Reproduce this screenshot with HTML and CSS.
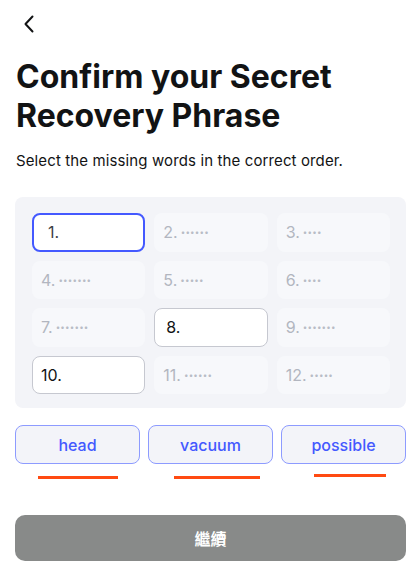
FILE: index.html
```html
<!DOCTYPE html>
<html>
<head>
<meta charset="utf-8">
<link rel="stylesheet" href="styles.css">
</head>
<body>
<div class="page">
  <div class="header">
    <svg class="back" width="12" height="18" viewBox="0 0 12 18"><path d="M9.5 1.5 L2.5 9 L9.5 16.5" fill="none" stroke="#121314" stroke-width="2" stroke-linecap="round" stroke-linejoin="round"/></svg>
  </div>
  <h1 class="title">Confirm your Secret Recovery Phrase</h1>
  <p class="subtitle">Select the missing words in the correct order.</p>
  <div class="grid">
    <div class="cell active">1.</div>
    <div class="cell hidden">2. <span class="dots">••••••</span></div>
    <div class="cell hidden">3. <span class="dots">••••</span></div>
    <div class="cell hidden">4. <span class="dots">•••••••</span></div>
    <div class="cell hidden">5. <span class="dots">•••••</span></div>
    <div class="cell hidden">6. <span class="dots">••••</span></div>
    <div class="cell hidden">7. <span class="dots">•••••••</span></div>
    <div class="cell empty wide-pad">8.</div>
    <div class="cell hidden">9. <span class="dots">•••••••</span></div>
    <div class="cell empty">10.</div>
    <div class="cell hidden">11. <span class="dots">••••••</span></div>
    <div class="cell hidden">12. <span class="dots">•••••</span></div>
  </div>
  <div class="words">
    <div class="word-col"><button class="word">head</button><span class="mark m1"></span></div>
    <div class="word-col"><button class="word">vacuum</button><span class="mark m2"></span></div>
    <div class="word-col"><button class="word">possible</button><span class="mark m3"></span></div>
  </div>
  <button class="continue">繼續</button>
</div>
</body>
</html>
```
FILE: styles.css
```css
* { box-sizing: border-box; }
html, body { margin: 0; padding: 0; background: #ffffff; }
body { font-family: Inter, "Noto Sans CJK TC", sans-serif; color: #121314; }
.page { width: 420px; height: 577px; padding: 0 14px 0 15px; }
.header { height: 46px; padding-top: 15px; padding-left: 8px; }
.back { display: block; }
.title { margin: 11px 0 0 1px; font-size: 32px; line-height: 39px; font-weight: 700; letter-spacing: 0; }
.subtitle { margin: 16px 0 0 1px; font-size: 15px; line-height: 20px; letter-spacing: 0.12px; color: #121314; }
.grid {
  margin-top: 26px;
  background: #f3f4f8;
  border-radius: 8px;
  padding: 16px 16px 14px 17px;
  display: grid;
  grid-template-columns: repeat(3, 1fr);
  gap: 9px 9px;
}
.cell {
  height: 38.5px;
  border-radius: 8px;
  display: flex;
  align-items: center;
  padding-left: 9px;
  font-size: 16px;
  white-space: nowrap;
}
.cell.hidden { background: #f7f8fb; color: #b2b6c0; }
.cell.active { background: #fff; border: 2px solid #4459ff; padding-left: 14px; color: #3b3e45; }
.cell.empty { background: #fff; border: 1px solid #c6c8d0; padding-left: 8px; color: #121314; }
.cell.empty.wide-pad { padding-left: 11px; }
.dots { font-size: 8px; letter-spacing: 0.2px; margin-left: 3px; color: #b8bcc6; }
.words { margin-top: 17px; display: grid; grid-template-columns: repeat(3, 1fr); gap: 8px; }
.word-col { display: flex; flex-direction: column; }
.word {
  height: 39px;
  border: 1px solid #8d9bff;
  background: #f3f4f9;
  border-radius: 8px;
  color: #4459ff;
  font-family: Inter, sans-serif;
  font-size: 16px;
  font-weight: 500;
}
.mark { display: block; height: 3px; background: #ff4a12; margin-top: 12px; }
.m1 { margin-left: 23px; width: 80px; }
.m2 { margin-left: 26px; width: 86px; }
.m3 { margin-left: 33px; width: 72px; margin-top: 10px; }
.continue {
  margin-top: 36px;
  width: 100%;
  height: 46px;
  border: none;
  border-radius: 10px;
  background: #888a89;
  color: #ffffff;
  font-family: "Noto Sans CJK TC", sans-serif;
  font-size: 16px;
  font-weight: 700;
}
```
